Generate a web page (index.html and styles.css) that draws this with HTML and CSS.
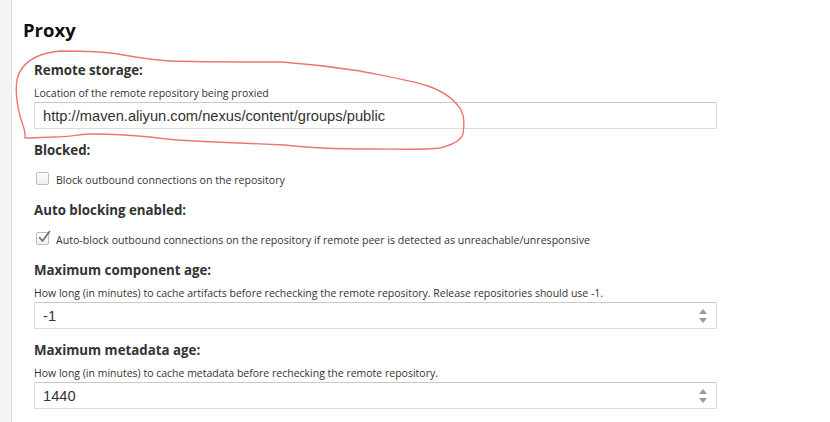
FILE: index.html
```html
<!DOCTYPE html>
<html>
<head>
<meta charset="utf-8">
<link rel="stylesheet" href="styles.css">
</head>
<body>
<div class="page">
  <aside class="side"></aside>
  <main class="main">
    <h1 class="title">Proxy</h1>
    <div class="fields">
      <div class="field">
        <div class="label">Remote storage:</div>
        <div class="help">Location of the remote repository being proxied</div>
        <div class="input"><span class="value">http://maven.aliyun.com/nexus/content/groups/public</span></div>
      </div>
      <div class="field check-field">
        <div class="label">Blocked:</div>
        <div class="check-row">
          <span class="box"></span>
          <span class="check-text">Block outbound connections on the repository</span>
        </div>
      </div>
      <div class="field check-field">
        <div class="label">Auto blocking enabled:</div>
        <div class="check-row">
          <span class="box checked"><svg viewBox="0 0 14 14" width="14" height="14"><path d="M2.5 7.5 L5.5 11 L12.5 1.5" fill="none" stroke="#6b6b6b" stroke-width="1.6" stroke-linecap="round" stroke-linejoin="round"/></svg></span>
          <span class="check-text">Auto-block outbound connections on the repository if remote peer is detected as unreachable/unresponsive</span>
        </div>
      </div>
      <div class="field">
        <div class="label">Maximum component age:</div>
        <div class="help">How long (in minutes) to cache artifacts before rechecking the remote repository. Release repositories should use -1.</div>
        <div class="input"><span class="value">-1</span><span class="spinner"><span class="up"></span><span class="down"></span></span></div>
      </div>
      <div class="field">
        <div class="label">Maximum metadata age:</div>
        <div class="help">How long (in minutes) to cache metadata before rechecking the remote repository.</div>
        <div class="input"><span class="value">1440</span><span class="spinner"><span class="up"></span><span class="down"></span></span></div>
      </div>
    </div>
  </main>
</div>
<svg class="annotation" width="830" height="422" viewBox="0 0 830 422">
  <path d="M25 138 C26 130 22 124 20 116 C17 104 15 92 17 80 C19 70 26 62 36 57 C44 53 50 52 60 51 C80 51 100 51 118 54 C135 57 150 60 170 61 C200 62 250 62 282 62 C310 64 335 67 360 71 C385 76 410 80 428 86 C445 92 455 100 461 110 C465 118 464 126 463 134 C461 140 452 145 440 148 C425 150 400 149 370 149 C340 149 310 148 285 145 C260 144 240 143 215 142 C190 141 170 140 150 137 C130 135 110 134 92 134 C80 134 70 137 55 137 C45 137 35 138 25 138" fill="none" stroke="#ec7575" stroke-width="1.4" stroke-linejoin="round" stroke-linecap="round"/>
</svg>
</body>
</html>
```
FILE: styles.css
```css
html, body {
  margin: 0;
  padding: 0;
  background: #ffffff;
}
body {
  position: relative;
  width: 830px;
  height: 422px;
  overflow: hidden;
  font-family: "Open Sans", Lato, sans-serif;
  color: #333333;
}
.page {
  display: flex;
  height: 422px;
}
.side {
  width: 11px;
  flex: none;
  background: #f4f4f4;
  border-right: 1px solid #e2e2e2;
}
.main {
  flex: 1;
  padding: 18px 0 0 11px;
}
.title {
  margin: 0 0 20px 0;
  font-size: 18.5px;
  line-height: 24px;
  font-weight: 700;
  color: #111111;
}
.fields {
  padding-left: 11px;
  width: 683px;
}
.field {
  margin-bottom: 13px;
}
.check-field {
  margin-bottom: 17px;
}
.label {
  font-size: 13.3px;
  line-height: 16px;
  font-weight: 700;
  color: #333333;
  margin-bottom: 9px;
}
.check-field .label {
  margin-bottom: 13px;
}
.help {
  font-size: 10.5px;
  line-height: 13px;
  color: #333333;
  margin-bottom: 2px;
  white-space: nowrap;
}
.input {
  box-sizing: border-box;
  height: 27px;
  border: 1px solid #dcdcdc;
  border-top-color: #c9c9c9;
  display: flex;
  align-items: center;
  justify-content: space-between;
  padding: 0 9px 0 8px;
  background: #ffffff;
}
.value {
  font-family: "Liberation Sans", Arial, sans-serif;
  font-size: 14.7px;
  color: #333333;
}
.spinner {
  display: flex;
  flex-direction: column;
  gap: 4px;
  align-items: center;
}
.up {
  width: 0;
  height: 0;
  border-left: 4px solid transparent;
  border-right: 4px solid transparent;
  border-bottom: 5px solid #9a9a9a;
}
.down {
  width: 0;
  height: 0;
  border-left: 4px solid transparent;
  border-right: 4px solid transparent;
  border-top: 5px solid #9a9a9a;
}
.check-row {
  display: flex;
  align-items: center;
  height: 14px;
  padding-left: 2px;
}
.box {
  box-sizing: border-box;
  width: 13px;
  height: 13px;
  border: 1px solid #bdbdbd;
  border-radius: 2px;
  background: linear-gradient(#ffffff, #efefef);
  margin-right: 7px;
  position: relative;
  flex: none;
}
.box svg {
  position: absolute;
  left: 0;
  top: -3px;
}
.check-text {
  font-size: 10.6px;
  line-height: 14px;
  color: #333333;
  padding-top: 3px;
  white-space: nowrap;
}
.annotation {
  position: absolute;
  left: 0;
  top: 0;
  pointer-events: none;
}
```
